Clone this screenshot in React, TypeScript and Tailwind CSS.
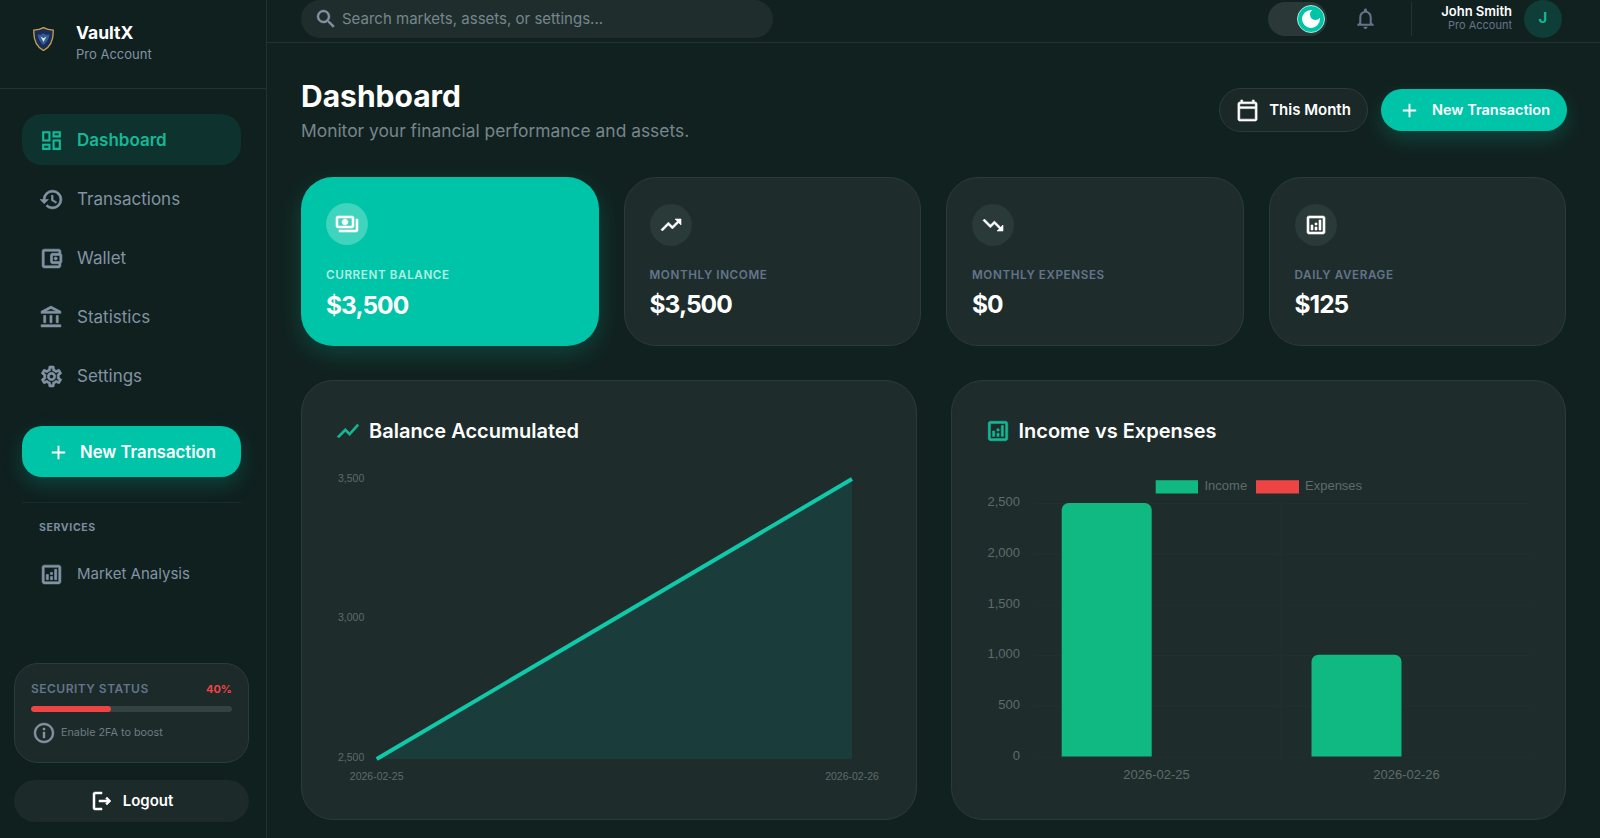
import type { ReactNode } from "react";
import {
  MdAdd,
  MdDarkMode,
  MdHistory,
  MdOutlineAccountBalance,
  MdOutlineAccountBalanceWallet,
  MdOutlineAnalytics,
  MdOutlineCalendarToday,
  MdOutlineDashboard,
  MdOutlineInfo,
  MdOutlineLogout,
  MdOutlineNotifications,
  MdOutlinePayments,
  MdOutlineSettings,
  MdSearch,
  MdShowChart,
  MdTrendingDown,
  MdTrendingUp,
} from "react-icons/md";

const FONT = "font-['Inter','Liberation_Sans',sans-serif]";
// the material icons carry an invisible 24x24 path, keep it out of the stroke
const NO_BOX = "[&_path[fill='none']]:[stroke:none]";

const navItems = [
  { label: "Dashboard", icon: MdOutlineDashboard, active: true },
  { label: "Transactions", icon: MdHistory },
  { label: "Wallet", icon: MdOutlineAccountBalanceWallet },
  { label: "Statistics", icon: MdOutlineAccountBalance },
  { label: "Settings", icon: MdOutlineSettings },
];

const stats = [
  { label: "CURRENT BALANCE", value: "$3,500", icon: MdOutlinePayments, primary: true },
  { label: "MONTHLY INCOME", value: "$3,500", icon: MdTrendingUp },
  { label: "MONTHLY EXPENSES", value: "$0", icon: MdTrendingDown },
  { label: "DAILY AVERAGE", value: "$125", icon: MdOutlineAnalytics },
];

function Logo() {
  return (
    <svg width="21" height="24" viewBox="0 0 21 24" className="shrink-0">
      <path d="M10.5 0.6C13.5 2.4 16.6 3 20.2 3.1C20.6 11.5 18.5 19.2 10.5 23.5C2.5 19.2 0.4 11.5 0.8 3.1C4.4 3 7.5 2.4 10.5 0.6Z" fill="#1b2c55" stroke="#c9a24f" strokeWidth="1.3" />
      <path d="M4.5 7.5C6.5 7.5 8.8 8.5 10.5 6C12.2 8.5 14.5 7.5 16.5 7.5C16 12 13.5 15.5 10.5 18C7.5 15.5 5 12 4.5 7.5Z" fill="#2f5c9c" />
      <path d="M7.5 9.5L10.5 15L13.5 9.5L10.5 11.2Z" fill="#e8e2c8" />
    </svg>
  );
}

function NavLink({ label, icon: Icon, active }: { label: string; icon: typeof MdHistory; active?: boolean }) {
  return (
    <a className={`flex h-[51px] items-center gap-[13px] rounded-[20px] pl-[17px] pt-[2px] ${active ? "bg-[#0e322d] text-[#14b897]" : "text-[#8393a3]"}`}>
      <Icon size={25} strokeWidth={active ? 0.15 : 0.6} className={`shrink-0 ${NO_BOX}`} />
      <span className={`text-[17px] ${active ? "font-semibold" : "font-normal"}`}>{label}</span>
    </a>
  );
}

function Sidebar() {
  return (
    <aside className="flex h-full w-[267px] shrink-0 flex-col border-r border-[#233331] bg-[#0f201f]">
      <div className="flex h-[89px] shrink-0 items-start gap-[22px] border-b border-[#233331] pl-[33px] pt-[27px]">
        <Logo />
        <div className="-mt-[7px]">
          <p className="text-[17.5px] font-bold leading-[26px] text-white">VaultX</p>
          <p className="text-[13px] leading-[17px] text-[#8393a3]">Pro Account</p>
        </div>
      </div>

      <nav className="flex flex-col gap-[8px] pl-[22px] pr-[25px] pt-[25px]">
        {navItems.map((item) => (
          <NavLink key={item.label} {...item} />
        ))}
      </nav>

      <div className="pl-[22px] pr-[25px] pt-[25px]">
        <button className="flex h-[51px] w-full items-center justify-center gap-[10px] rounded-[20px] bg-[#00c4a7] pt-[2px] text-[16.7px] font-semibold text-white shadow-[0_8px_20px_rgba(0,196,167,0.22)]">
          <MdAdd size={23} />
          New Transaction
        </button>
        <div className="mt-[25px] border-t border-[#1b2b2a]" />
        <p className="mt-[17px] pl-[17px] text-[10.5px] font-bold leading-[16px] tracking-[0.06em] text-[#7d8d9c]">SERVICES</p>
        <div className="mt-[12px]">
          <a className="flex h-[51px] items-center gap-[13px] pl-[17px] pt-[1px] text-[#8393a3]">
            <MdOutlineAnalytics size={25} strokeWidth={0.6} className={`shrink-0 ${NO_BOX}`} />
            <span className="text-[15px]">Market Analysis</span>
          </a>
        </div>
      </div>

      <div className="mt-auto pb-[16px] pl-[14px] pr-[17px]">
        <div className="h-[100px] rounded-[24px] border border-[#2b3b39] bg-[#1c2a29] px-[16px] pt-[16px]">
          <div className="flex h-[18px] items-center justify-between">
            <span className="text-[12px] font-semibold tracking-[0.04em] text-[#64748b]">SECURITY STATUS</span>
            <span className="text-[11px] font-bold text-[#ef4444]">40%</span>
          </div>
          <div className="mt-[8px] h-[6px] overflow-hidden rounded-full bg-[#33433f]">
            <div className="h-full rounded-full bg-[#ef4444]" style={{ width: "40%" }} />
          </div>
          <div className="mt-[9px] flex items-center gap-[5px] pl-[1px]">
            <MdOutlineInfo size={24} strokeWidth={0.4} className={`shrink-0 text-[#8393a3] ${NO_BOX}`} />
            <span className="text-[10.8px] text-[#6d7c84]">Enable 2FA to boost</span>
          </div>
        </div>
        <button className="mt-[17px] flex h-[42px] w-full items-center justify-center gap-[9px] rounded-full bg-[#1c2a29] text-[15px] font-semibold text-white">
          <MdOutlineLogout size={24} strokeWidth={0.5} className={NO_BOX} />
          Logout
        </button>
      </div>
    </aside>
  );
}

function Topbar() {
  return (
    <header className="flex h-[43px] shrink-0 items-center justify-between border-b border-[#233331] pb-[5px] pl-[34px] pr-[38px]">
      <div className="flex h-[38px] w-[472px] items-center gap-[4px] rounded-full bg-[#1f2e2c] pl-[13px]">
        <MdSearch size={24} strokeWidth={0.4} className={`shrink-0 text-[#8393a3] ${NO_BOX}`} />
        <span className="pt-[1px] text-[15px] text-[#76868c]">Search markets, assets, or settings...</span>
      </div>
      <div className="flex items-center">
        <div className="flex h-[34px] w-[59px] items-center justify-end rounded-full bg-[#2a3937] pr-[2px]">
          <div className="flex h-[28px] w-[28px] items-center justify-center rounded-full border border-[#a5e8dc] bg-[#00c4a7]">
            <MdDarkMode size={24} className="text-white" />
          </div>
        </div>
        <MdOutlineNotifications size={25} className="ml-[26px] text-[#64748b]" />
        <div className="ml-[33px] h-[34px] border-l border-[#233331]" />
        <div className="-mt-[2px] ml-[29px] text-right">
          <p className="text-[13px] font-semibold leading-[15px] text-white">John Smith</p>
          <p className="text-[11px] leading-[13px] text-[#64748b]">Pro Account</p>
        </div>
        <div className="ml-[12px] flex h-[38px] w-[38px] items-center justify-center rounded-full bg-[#0f3d37] text-[15px] font-bold text-[#14b897]">J</div>
      </div>
    </header>
  );
}

function StatCard({ label, value, icon: Icon, primary }: { label: string; value: string; icon: typeof MdHistory; primary?: boolean }) {
  return (
    <div className={`h-[169px] rounded-[32px] px-[25px] pt-[26px] ${primary ? "bg-[#00c4a7] shadow-[0_8px_24px_rgba(0,196,167,0.22)]" : "border border-[#2b3b39] bg-[#1e2d2c]"}`}>
      <div className={`flex h-[42px] w-[42px] items-center justify-center rounded-full ${primary ? "bg-white/25" : "bg-[#2a3a38]"}`}>
        <Icon size={24} strokeWidth={0.6} className={`text-white ${NO_BOX}`} />
      </div>
      <p className={`text-[11.7px] font-semibold leading-[16px] tracking-[0.05em] ${primary ? "mt-[22px] text-[#b0efe4]" : "mt-[21px] text-[#64748b]"}`}>{label}</p>
      <p className={`text-[24.5px] font-bold leading-[30px] tracking-[-0.04em] text-white ${primary ? "mt-[7px]" : "mt-[6px]"}`}>{value}</p>
    </div>
  );
}

function ChartCard({ title, icon, children }: { title: string; icon: ReactNode; children: ReactNode }) {
  return (
    <section className="h-[440px] overflow-hidden rounded-[32px] border border-[#2b3b39] bg-[#1e2d2c] px-[35px] pt-[36px]">
      <div className="-ml-[2px] flex h-[28px] items-center gap-[8px]">
        {icon}
        <h2 className="text-[20px] font-semibold text-white">{title}</h2>
      </div>
      <div className="mt-[17px]">{children}</div>
    </section>
  );
}

const axisText = "fill-[#5f6b69] font-['Liberation_Sans',sans-serif]";

function BalanceChart() {
  return (
    <svg width="544" height="330" className="block">
      <polygon points="39.7,297 515,17 515,297" fill="#1a3d3c" />
      <line x1="39.7" y1="297" x2="515" y2="17" stroke="#0fc9a8" strokeWidth="4" />
      {[
        ["3,500", 17],
        ["3,000", 156],
        ["2,500", 296],
      ].map(([t, y]) => (
        <text key={t} x="1" y={y} dominantBaseline="middle" fontSize="10.5" className={axisText}>{t}</text>
      ))}
      <text x="39.7" y="315" textAnchor="middle" dominantBaseline="middle" fontSize="10.5" className={axisText}>2026-02-25</text>
      <text x="515" y="315" textAnchor="middle" dominantBaseline="middle" fontSize="10.5" className={axisText}>2026-02-26</text>
    </svg>
  );
}

function IncomeChart() {
  const ticks = [
    ["2,500", 41],
    ["2,000", 92],
    ["1,500", 142.5],
    ["1,000", 193],
    ["500", 244],
    ["0", 294.5],
  ] as const;
  return (
    <svg width="544" height="330" className="block">
      {ticks.map(([t, y]) => (
        <g key={t}>
          <line x1="44.7" x2="544" y1={y + 0.5} y2={y + 0.5} stroke="#212f2e" />
          <text x="33" y={y} textAnchor="end" dominantBaseline="middle" fontSize="13" className={axisText}>{t}</text>
        </g>
      ))}
      {[44.7, 293.4, 544].map((x) => (
        <line key={x} x1={x} x2={x} y1="41" y2="300" stroke="#212f2e" />
      ))}
      <path d="M74.7 294.5V48a7 7 0 0 1 7-7h76a7 7 0 0 1 7 7V294.5Z" fill="#10b981" />
      <path d="M324.5 294.5V199.7a7 7 0 0 1 7-7h76a7 7 0 0 1 7 7V294.5Z" fill="#10b981" />
      <rect x="168.7" y="18.2" width="42.3" height="13.3" fill="#10b981" />
      <text x="217.5" y="24.5" dominantBaseline="middle" fontSize="13" className={axisText}>Income</text>
      <rect x="269" y="18.2" width="43" height="13.3" fill="#ef4444" />
      <text x="318" y="24.5" dominantBaseline="middle" fontSize="13" className={axisText}>Expenses</text>
      <text x="169.5" y="314" textAnchor="middle" dominantBaseline="middle" fontSize="13" className={axisText}>2026-02-25</text>
      <text x="419.5" y="314" textAnchor="middle" dominantBaseline="middle" fontSize="13" className={axisText}>2026-02-26</text>
    </svg>
  );
}

export default function App() {
  return (
    <div className={`flex h-screen w-full overflow-hidden bg-[#11211f] ${FONT}`}>
      <Sidebar />
      <main className="flex min-w-0 flex-1 flex-col">
        <Topbar />
        <div className="pl-[34px] pr-[34px] pt-[35px]">
          <div className="flex items-center justify-between">
            <div>
              <h1 className="text-[30px] font-bold leading-[36px] text-white">Dashboard</h1>
              <p className="mt-[5px] text-[17.4px] leading-[24px] text-[#76868c]">Monitor your financial performance and assets.</p>
            </div>
            <div className="-mr-[1px] -mt-[2px] flex items-center gap-[13px]">
              <button className="flex h-[44px] w-[149px] items-center justify-center gap-[10px] rounded-full border border-[#2b3b39] bg-[#1a2928] pt-[2px] text-[15px] font-semibold text-white">
                <MdOutlineCalendarToday size={23} strokeWidth={0.6} className={NO_BOX} />
                This Month
              </button>
              <button className="flex h-[42px] w-[186px] items-center justify-center gap-[11px] rounded-full bg-[#00c4a7] pt-[1px] text-[14.5px] font-semibold text-white shadow-[0_8px_20px_rgba(0,196,167,0.22)]">
                <MdAdd size={23} />
                New Transaction
              </button>
            </div>
          </div>

          <div className="mt-[34px] grid grid-cols-4 gap-[25px]">
            {stats.map((s) => (
              <StatCard key={s.label} {...s} />
            ))}
          </div>

          <div className="mt-[34px] grid grid-cols-2 gap-[34px]">
            <ChartCard title="Balance Accumulated" icon={<MdShowChart size={26} strokeWidth={0.5} className={`text-[#14b897] ${NO_BOX}`} />}>
              <BalanceChart />
            </ChartCard>
            <ChartCard title="Income vs Expenses" icon={<MdOutlineAnalytics size={26} strokeWidth={0.5} className={`text-[#14b897] ${NO_BOX}`} />}>
              <IncomeChart />
            </ChartCard>
          </div>
        </div>
      </main>
    </div>
  );
}
